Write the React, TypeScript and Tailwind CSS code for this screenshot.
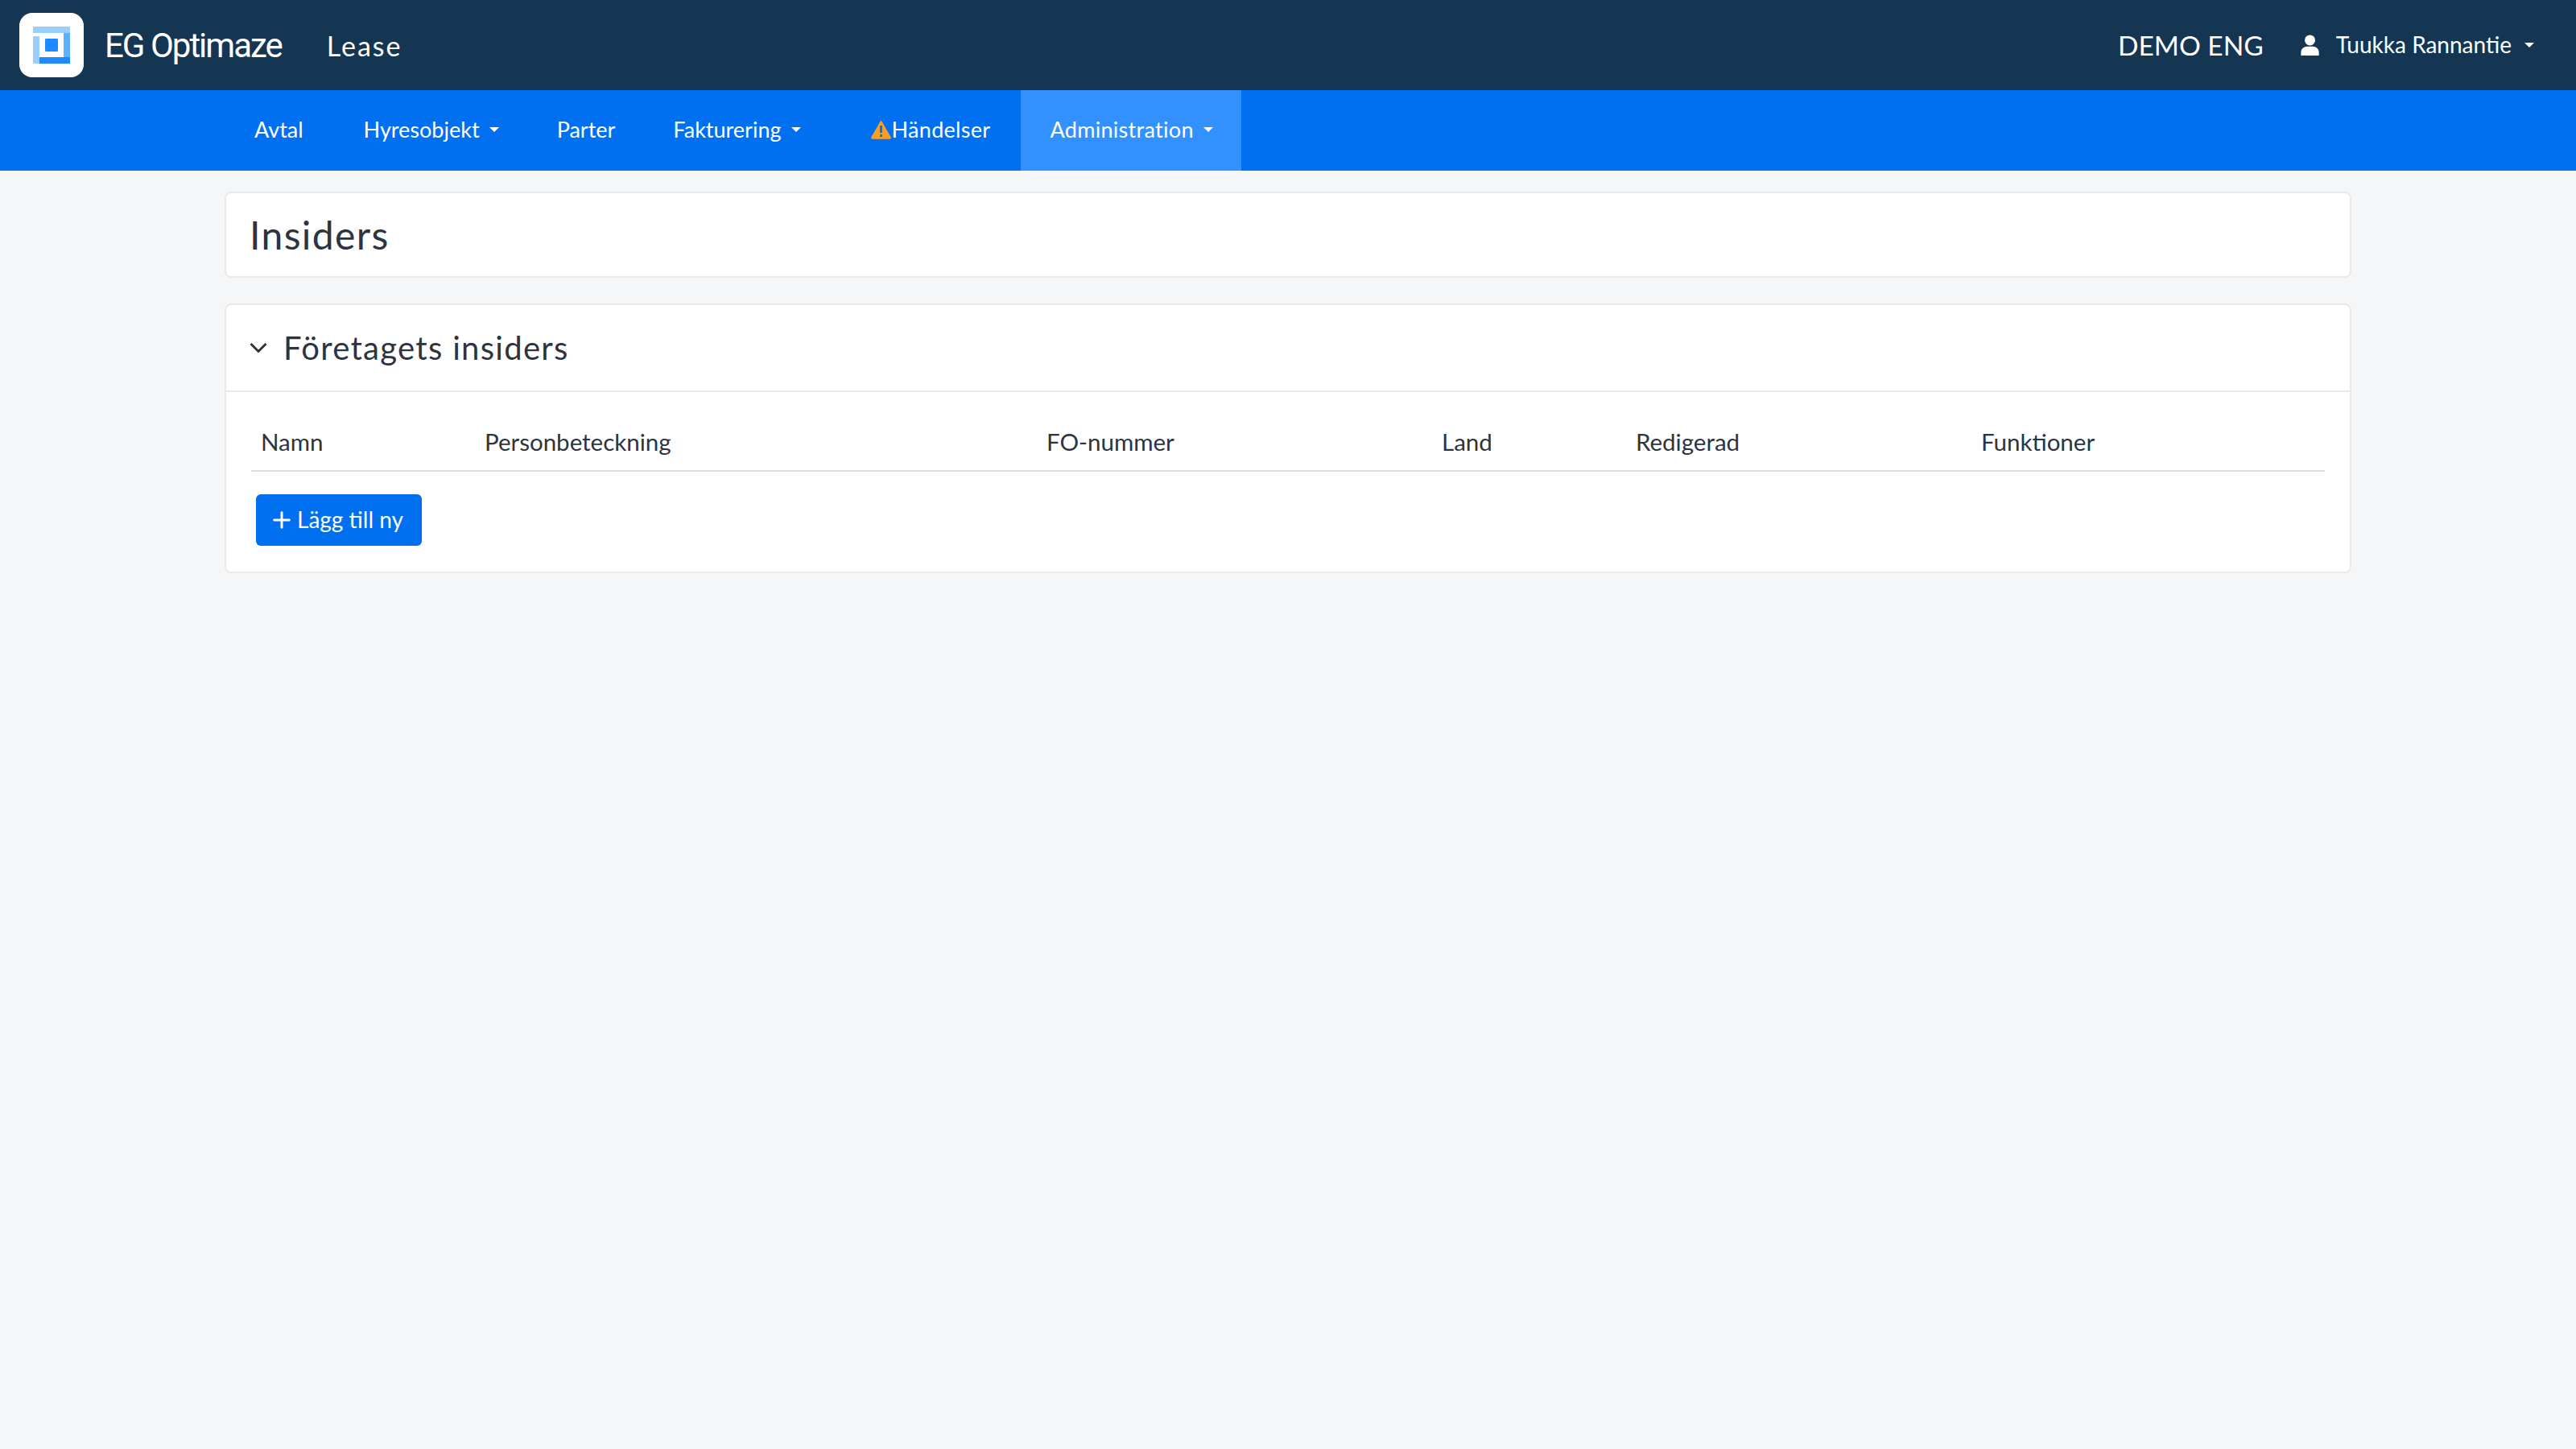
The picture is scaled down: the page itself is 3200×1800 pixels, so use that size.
import { Plus } from "lucide-react";

const font = "font-['Lato','Open_Sans',sans-serif]";

const Caret = ({ gap = "ml-[12px]" }: { gap?: string }) => (
  <span className={`${gap} inline-block h-0 w-0 border-x-[6px] border-t-[6px] border-x-transparent border-t-white`} />
);

const Logo = () => (
  <div className="flex h-[80px] w-[80px] items-center justify-center rounded-[16px] bg-white">
    <svg width="46" height="46" viewBox="0 0 46 46">
      <rect x="0" y="0" width="46" height="8" fill="#99cfff" />
      <rect x="0" y="12" width="8" height="34" fill="#99cfff" />
      <rect x="38" y="8" width="8" height="30" fill="#5cb0ff" />
      <rect x="8" y="38" width="38" height="8" fill="#1f8aff" />
      <rect x="15" y="15" width="16" height="16" rx="1" fill="#1f8aff" />
    </svg>
  </div>
);

const columns = [
  { label: "Namn", width: "w-[278px]" },
  { label: "Personbeteckning", width: "w-[698px]" },
  { label: "FO-nummer", width: "w-[491px]" },
  { label: "Land", width: "w-[241px]" },
  { label: "Redigerad", width: "w-[429px]" },
  { label: "Funktioner", width: "flex-1" },
];

export default function App() {
  return (
    <div className={`min-h-[1800px] bg-[#f5f6f8] ${font} text-[#2b3440]`}>
      <header className="flex h-[112px] items-center bg-[#153652] pl-[24px] pr-[52px] text-white">
        <Logo />
        <span className="ml-[26px] font-['Roboto',sans-serif] text-[42px] tracking-[-2px]">EG Optimaze</span>
        <span className="ml-[56px] text-[34px] tracking-[2px]">Lease</span>
        <span className="ml-auto text-[33.5px]">DEMO ENG</span>
        <svg className="ml-[46px]" width="23" height="26" viewBox="0 0 24 28" fill="white">
          <circle cx="12" cy="7.5" r="7" />
          <path d="M0 28v-4c0-5 4-8 8-8h8c4 0 8 3 8 8v4z" />
        </svg>
        <span className="ml-[21px] pb-[2px] text-[28px]">Tuukka Rannantie</span>
        <Caret gap="ml-[16px]" />
      </header>

      <nav className="flex h-[100px] items-stretch bg-[#006ff0] pl-[280px] text-[27px] text-white">
        <a className="flex items-center pb-[2px] pl-[36px] pr-[39px]">Avtal</a>
        <a className="flex items-center px-[36px] pb-[2px]">Hyresobjekt<Caret /></a>
        <a className="flex items-center px-[36px] pb-[2px]">Parter</a>
        <a className="flex items-center px-[36px] pb-[2px]">Fakturering<Caret /></a>
        <a className="ml-[14px] flex items-center pb-[2px] pl-[36px] pr-[38px] tracking-[0.3px]">
          <svg width="27" height="24" viewBox="0 0 26 24">
            <path d="M13 1.5 L24.5 21.5 Q25 23 23.5 23 L2.5 23 Q1 23 1.5 21.5 Z" fill="#f59f27" stroke="#f59f27" strokeWidth="1.5" strokeLinejoin="round" />
            <rect x="11.6" y="7" width="2.8" height="9" fill="#0b6fe8" />
            <rect x="11.6" y="18" width="2.8" height="3" fill="#0b6fe8" />
          </svg>
          Händelser
        </a>
        <a className="flex items-center bg-[#3391ff] pb-[2px] pl-[36px] pr-[35px] tracking-[0.3px]">Administration<Caret /></a>
      </nav>

      <main className="flex flex-col gap-[32px] px-[279px] pt-[26px]">
        <section className="flex h-[107px] items-center rounded-[8px] border-2 border-[#e8e9eb] bg-white px-[29px]">
          <h1 className="text-[48px] font-normal tracking-[1.4px]">Insiders</h1>
        </section>

        <section className="rounded-[8px] border-2 border-[#e8e9eb] bg-white">
          <div className="flex h-[108px] items-center border-b-2 border-[#e8e9eb] px-[29px]">
            <svg width="22" height="14" viewBox="0 0 22 14" fill="none" stroke="#2b3440" strokeWidth="3">
              <path d="M1.5 2 L11 11.5 L20.5 2" />
            </svg>
            <h2 className="ml-[20px] text-[40px] font-normal tracking-[1.3px]">Företagets insiders</h2>
          </div>
          <div className="px-[31px] pb-[32px] pt-[41px]">
            <div className="flex h-[58px] border-b-2 border-[#dcdcdc] pb-[16px]">
              {columns.map((c) => (
                <div key={c.label} className={`${c.width} px-[12px] text-[29.5px] leading-[42px]`}>
                  {c.label}
                </div>
              ))}
            </div>
            <button className="ml-[6px] mt-[28px] flex h-[64px] w-[206px] items-center rounded-[6px] bg-[#006ff0] pl-[16px] text-[28px] text-white">
              <Plus size={32} strokeWidth={2.2} />
              <span className="ml-[3px] -mt-[2px]">Lägg till ny</span>
            </button>
          </div>
        </section>
      </main>
    </div>
  );
}
